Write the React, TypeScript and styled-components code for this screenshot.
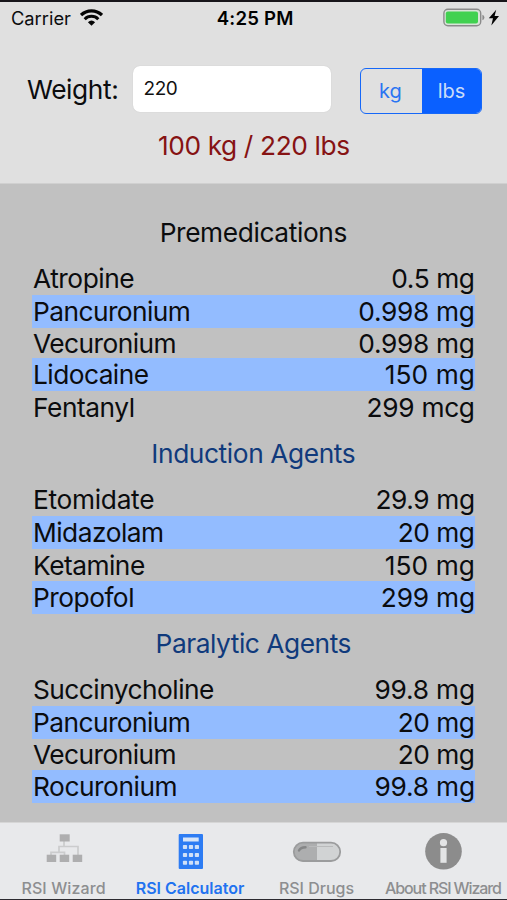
import React from 'react';
import styled, { createGlobalStyle } from 'styled-components';

const GlobalStyle = createGlobalStyle`
  * { box-sizing: border-box; }
  html, body { margin: 0; padding: 0; }
  body { font-family: Inter, "Liberation Sans", sans-serif; color: #0b0c0e; background: #c1c1c1; }
`;

const Screen = styled.div`
  width: 507px;
  height: 900px;
  display: flex;
  flex-direction: column;
  overflow: hidden;
  background: #c1c1c1;
  border-top: 2px solid #17151a;
  border-bottom: 1px solid #2c2a30;
`;

const Header = styled.header`
  height: 182px;
  flex: none;
  background: #e0e0e0;
  border-bottom: 1px solid #d0d0d0;
`;

const StatusBar = styled.div`
  height: 33px;
  display: grid;
  grid-template-columns: 1fr auto 1fr;
  align-items: center;
  padding: 0 8px 1px 11px;
`;

const Carrier = styled.div`
  display: flex;
  align-items: center;
  gap: 9px;
  font-size: 18.3px;
`;

const Clock = styled.div`
  font-size: 18.6px;
  font-weight: 600;
  color: #000;
`;

const Power = styled.div`
  display: flex;
  align-items: center;
  justify-content: flex-end;
`;

const Tracked = styled.span<{ $track?: number }>`
  display: block;
  white-space: nowrap;
  letter-spacing: ${(p) => p.$track ?? 0}px;
  margin-right: ${(p) => -(p.$track ?? 0)}px;
`;

const WeightForm = styled.div`
  display: flex;
  align-items: flex-start;
  padding: 31px 25px 0 27px;
`;

const WeightLabel = styled.label`
  width: 106px;
  font-size: 26.3px;
  line-height: 47px;
`;

const WeightInput = styled.input`
  width: 198px;
  height: 46px;
  border: 0;
  outline: 0;
  border-radius: 7px;
  background: #fff;
  padding: 0 10.5px 2px;
  font: 19px Inter, sans-serif;
  letter-spacing: -0.4px;
  color: #111;
  box-shadow: 0 0 1px #bbb;
`;

const Segments = styled.div`
  display: flex;
  width: 122px;
  height: 46px;
  margin: 2px 0 0 29px;
  border: 1.5px solid #1668f8;
  border-radius: 6px;
  overflow: hidden;
`;

const Segment = styled.button<{ $active?: boolean }>`
  flex: 1;
  display: flex;
  align-items: center;
  justify-content: center;
  border: 0;
  padding: ${(p) => (p.$active ? '0' : '0 2px 0 0')};
  font: 20px Inter, sans-serif;
  color: ${(p) => (p.$active ? '#c9dcf8' : '#2a74f2')};
  background: ${(p) => (p.$active ? '#0a60ff' : 'transparent')};
`;

const Summary = styled.div`
  display: flex;
  justify-content: center;
  margin-top: 14px;
  padding-left: 1px;
  font-size: 26.3px;
  line-height: 36px;
  color: #861313;
`;

const Doses = styled.main`
  flex: 1;
  padding: 28px 32px 0;
`;

const SectionTitle = styled.h2<{ $color: string; $gap: number }>`
  display: flex;
  justify-content: center;
  margin: 0 0 ${(p) => p.$gap}px;
  height: 42px;
  font-size: 26.3px;
  font-weight: 400;
  line-height: 42px;
  color: ${(p) => p.$color};
`;

const DrugTable = styled.div<{ $rows: string; $gap: number }>`
  display: grid;
  grid-template-rows: ${(p) => p.$rows};
  margin-bottom: ${(p) => p.$gap}px;
`;

const DrugRow = styled.div<{ $shaded: boolean }>`
  display: flex;
  align-items: center;
  justify-content: space-between;
  padding: 0 0 0 1px;
  font-size: 26.3px;
  background: ${(p) => (p.$shaded ? '#93bcff' : 'transparent')};
`;

const TabBar = styled.nav`
  height: 77px;
  flex: none;
  display: grid;
  grid-template-columns: 127px 126px 127px 127px;
  background: #e8e9eb;
  border-top: 1px solid #d6d6d6;
`;

const Tab = styled.a<{ $active?: boolean }>`
  display: flex;
  flex-direction: column;
  align-items: center;
  font-size: 16px;
  line-height: 18px;
  font-weight: ${(p) => (p.$active ? 600 : 500)};
  color: ${(p) => (p.$active ? '#2172f0' : '#8d8e90')};
`;

const TabIcon = styled.span`
  height: 56px;
  display: flex;
`;

const WifiIcon = () => (
  <svg width="23" height="19" viewBox="0 0 23 19" fill="none" stroke="#050505">
    <path d="M1 6.1 A15 15 0 0 1 22 6.1" strokeWidth="3.3" />
    <path d="M4.7 10.2 A9.5 9.5 0 0 1 18.3 10.2" strokeWidth="3" />
    <path d="M7.9 13.2 Q11.5 10 15.1 13.2 L11.5 16.8Z" fill="#050505" stroke="none" />
  </svg>
);

const BatteryIcon = () => (
  <svg width="56" height="20" viewBox="0 0 56 20">
    <rect x="0.9" y="1.2" width="36.8" height="16.6" rx="4" fill="#d9e4d8" stroke="#8b8b8b" strokeWidth="1.4" />
    <rect x="2.8" y="3.4" width="32.2" height="12.2" rx="2" fill="#41d150" />
    <path d="M39.4 6.7 Q41.4 7.5 41.4 9.5 T39.4 12.3Z" fill="#8b8b8b" />
    <path d="M53.2 1.7 L45.8 10.3 H50 L48.3 17.4 L56 8 H51.6Z" fill="#050505" />
  </svg>
);

const HierarchyIcon = () => (
  <svg width="38" height="56" viewBox="0 0 38 56">
    <path d="M19 18 V23.5 M14 29 V23.5 H33 V33 M6 33 V29.3 H19.5 V33" fill="none" stroke="#cbcccd" strokeWidth="1.7" />
    <g fill="#aeaeaf">
      <rect x="14.7" y="11.3" width="10" height="7.2" />
      <rect x="1.7" y="31.7" width="9.5" height="7.3" />
      <rect x="14.7" y="31.7" width="9.5" height="7.3" />
      <rect x="27.7" y="31.7" width="9.5" height="7.3" />
    </g>
  </svg>
);

const CalculatorIcon = () => (
  <svg width="26" height="56" viewBox="0 0 26 56">
    <rect x="1.7" y="11" width="24.3" height="35" rx="1" fill="#2d7cf3" />
    <rect x="6" y="14.5" width="15.7" height="4" fill="#d7e5f8" />
    <g fill="#cfe0f8">
      {[22, 30, 37.7].map((y) =>
        [5.9, 11.9, 17.8].map((x) => <rect key={`${x}-${y}`} x={x} y={y} width="4.2" height="4" rx="0.8" />)
      )}
    </g>
  </svg>
);

const PillIcon = () => (
  <svg width="50" height="56" viewBox="0 0 50 56">
    <path d="M11 19.5 H25 V38.5 H11 A9.5 9.5 0 0 1 11 19.5Z" fill="#adaeaf" />
    <path d="M25 19.5 H39 A9.5 9.5 0 0 1 39 38.5 H25Z" fill="#d1d3d4" />
    <rect x="1.8" y="19.6" width="46.4" height="18.4" rx="9.2" fill="none" stroke="#9b9c9d" strokeWidth="1.8" />
    <path d="M7 27.5 Q8.5 24.4 13.5 24.2" fill="none" stroke="#858687" strokeWidth="2.4" strokeLinecap="round" />
    <path d="M17 23.5 H41" stroke="#b9babb" strokeWidth="1" />
  </svg>
);

const InfoIcon = () => (
  <svg width="38" height="56" viewBox="0 0 38 56">
    <circle cx="18.5" cy="28.3" r="18.3" fill="#8c8c8c" />
    <circle cx="18.5" cy="19.7" r="3.6" fill="#e3e4e5" />
    <path d="M15.4 25 H21.6 V39.8 H15.4Z" fill="#e3e4e5" />
  </svg>
);

type Drug = [name: string, dose: string, nameTrack: number, doseTrack: number];
interface Section {
  title: string;
  track: number;
  color: string;
  titleGap: number;
  rows: string;
  gap: number;
  drugs: Drug[];
}

const sections: Section[] = [
  {
    title: 'Premedications', track: -0.38, color: '#0b0c0e', titleGap: 8, rows: '33px 33px 30px 33px 33px', gap: 9,
    drugs: [
      ['Atropine', '0.5 mg', -0.45, -0.4],
      ['Pancuronium', '0.998 mg', -0.55, -0.3],
      ['Vecuronium', '0.998 mg', -0.55, -0.3],
      ['Lidocaine', '150 mg', -0.55, 0.1],
      ['Fentanyl', '299 mcg', -0.45, -0.3],
    ],
  },
  {
    title: 'Induction Agents', track: -0.4, color: '#103a7c', titleGap: 8, rows: '33px 33px 32px 33px', gap: 9,
    drugs: [
      ['Etomidate', '29.9 mg', -0.3, -0.4],
      ['Midazolam', '20 mg', -0.5, -0.5],
      ['Ketamine', '150 mg', -0.5, 0.1],
      ['Propofol', '299 mg', -0.5, -0.2],
    ],
  },
  {
    title: 'Paralytic Agents', track: -0.45, color: '#103a7c', titleGap: 8, rows: '33px 33px 31px 33px', gap: 0,
    drugs: [
      ['Succinycholine', '99.8 mg', -0.53, -0.2],
      ['Pancuronium', '20 mg', -0.55, -0.5],
      ['Vecuronium', '20 mg', -0.55, -0.5],
      ['Rocuronium', '99.8 mg', -0.45, -0.2],
    ],
  },
];

export default function App() {
  return (
    <>
      <GlobalStyle />
      <Screen>
        <Header>
          <StatusBar>
            <Carrier>
              <Tracked>Carrier</Tracked>
              <WifiIcon />
            </Carrier>
            <Clock><Tracked $track={0.2}>4:25 PM</Tracked></Clock>
            <Power><BatteryIcon /></Power>
          </StatusBar>
          <WeightForm>
            <WeightLabel htmlFor="weight"><Tracked $track={-0.4}>Weight:</Tracked></WeightLabel>
            <WeightInput id="weight" defaultValue="220" />
            <Segments>
              <Segment>kg</Segment>
              <Segment $active>lbs</Segment>
            </Segments>
          </WeightForm>
          <Summary><Tracked $track={-0.38}>100 kg / 220 lbs</Tracked></Summary>
        </Header>
        <Doses>
          {sections.map((s) => (
            <section key={s.title}>
              <SectionTitle $color={s.color} $gap={s.titleGap}>
                <Tracked $track={s.track}>{s.title}</Tracked>
              </SectionTitle>
              <DrugTable $rows={s.rows} $gap={s.gap}>
                {s.drugs.map(([name, dose, nameTrack, doseTrack], i) => (
                  <DrugRow key={name} $shaded={i % 2 === 1}>
                    <Tracked $track={nameTrack}>{name}</Tracked>
                    <Tracked $track={doseTrack}>{dose}</Tracked>
                  </DrugRow>
                ))}
              </DrugTable>
            </section>
          ))}
        </Doses>
        <TabBar>
          <Tab><TabIcon><HierarchyIcon /></TabIcon><Tracked $track={0.1}>RSI Wizard</Tracked></Tab>
          <Tab $active><TabIcon><CalculatorIcon /></TabIcon><Tracked>RSI Calculator</Tracked></Tab>
          <Tab><TabIcon><PillIcon /></TabIcon><Tracked>RSI Drugs</Tracked></Tab>
          <Tab><TabIcon><InfoIcon /></TabIcon><Tracked $track={-1.1}>About RSI Wizard</Tracked></Tab>
        </TabBar>
      </Screen>
    </>
  );
}
